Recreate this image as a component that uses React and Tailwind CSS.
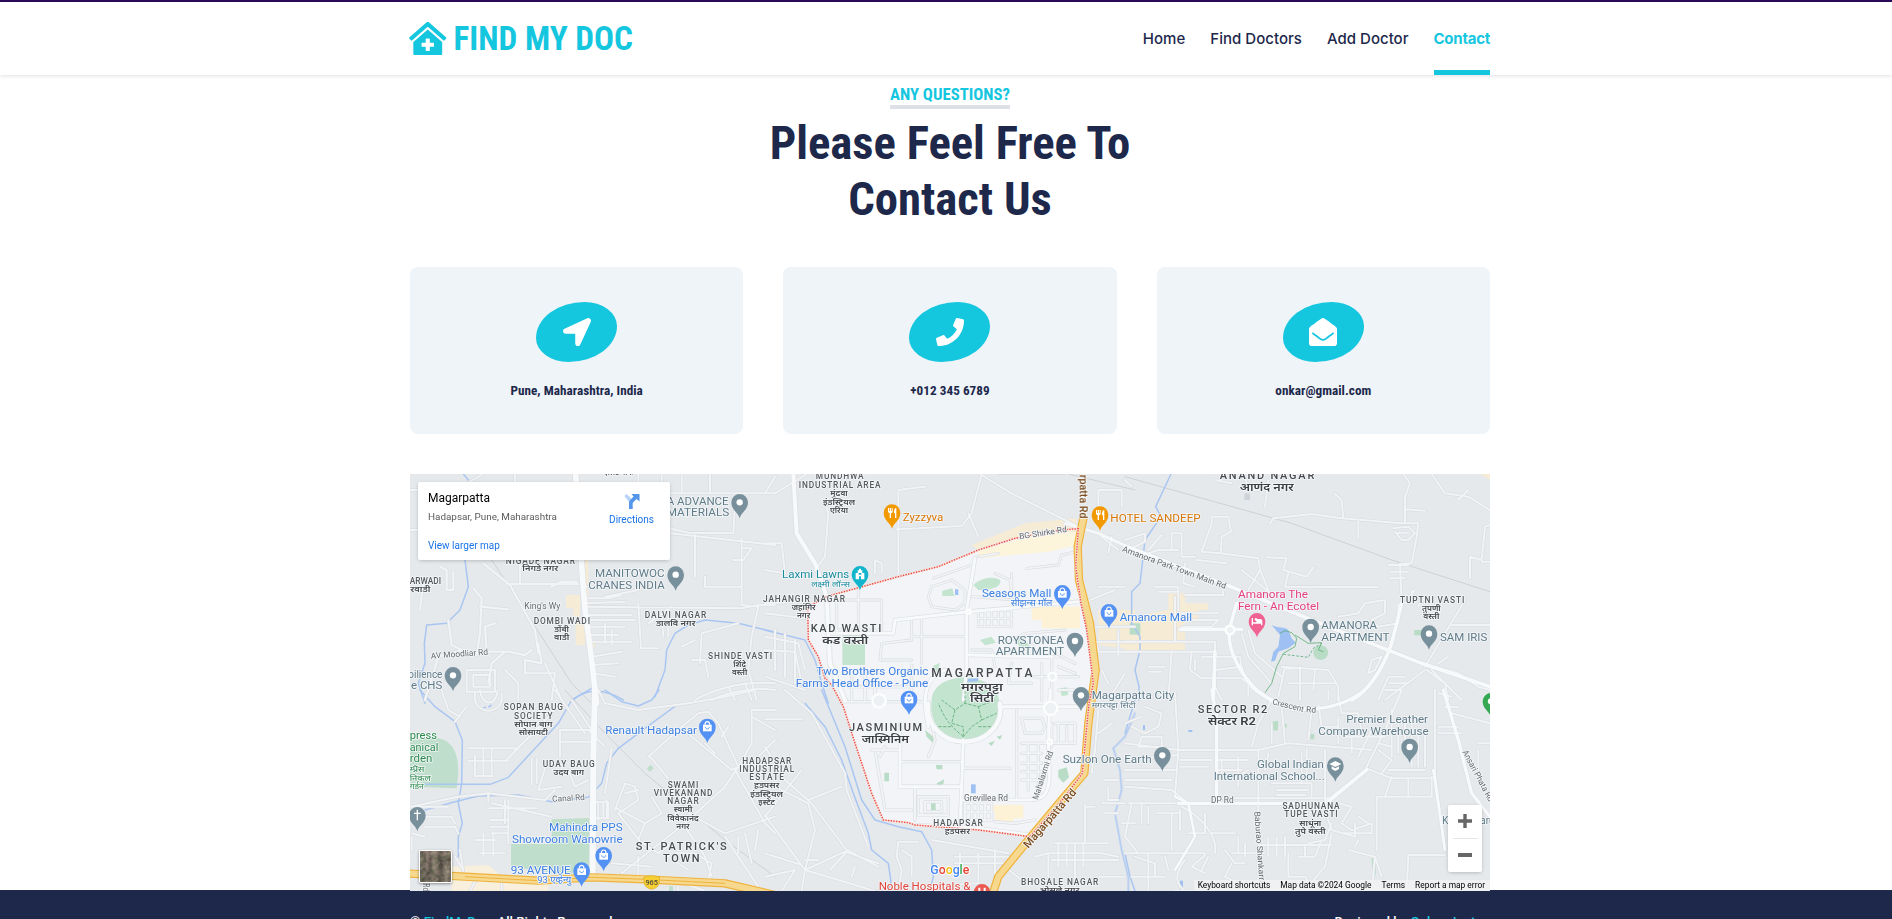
import React from "react";
import { FaLocationArrow, FaPhone, FaEnvelopeOpen, FaClinicMedical } from "react-icons/fa";

/* Origins of the map tiles; drawing inside a tile uses thirds of a pixel. */
const ORIGIN = {
  A: [405, 470],
  B: [765, 470],
  C: [1125, 470],
  D: [405, 690],
  E: [765, 690],
  F: [1125, 690],
};
const place = (t) => `translate(${ORIGIN[t][0]} ${ORIGIN[t][1]}) scale(0.33333)`;

const AREAS = [
  ["B", "M190 378L285 352L400 320L520 290L640 240L750 205L940 176L932 290L948 400L965 480L985 640L972 700L952 910L900 980L795 1100L640 1080L450 1065L355 1050L320 970L270 820L235 710L200 645L160 560L130 510L128 410Z", "#f2f4f7"],
  ["B", "M620 225L780 160L935 145V185L800 195L640 240Z", "#f6ecd6"],
  ["B", "M800 410H945V475H830V450H800Z", "#fdf2d6"],
  ["B", "M640 242L800 198L938 185V225L850 245L640 265Z", "#fdf4dc"],
  ["B", "M1000 420H1110V540L1000 525Z", "#f6ebd5"],
  ["C", "M0 445L130 420V370H180V400H250V420H220V455H180V540H0Z", "#f6ebd5"],
  ["C", "M1065 12H1095V30Z", "#f6ebd5"],
  ["C", "M14 460H46V494H14Z", "#b9dcc6"],
  ["A", "M483 375H525V440H505V415H483ZM512 455H540V525H512ZM530 270H550V400H530ZM545 510H570V532H545Z", "#f6ebd5"],
  ["B", "M232 495H300V585H232Z", "#c3e4cf"],
  ["B", "M625 345C650 320 690 318 705 330C712 348 680 362 640 360Z", "#c3e4cf"],
  ["B", "M532 362L562 355L568 378H532ZM645 510L680 500L692 518L660 526ZM740 505L775 500L795 530L770 535ZM505 588L525 578L518 605L500 600ZM885 655L905 652L910 675L890 678Z", "#c3e4cf"],
  ["E", "M500 30C505 -60 690 -60 702 30C712 100 660 148 595 150C535 145 490 100 500 30Z", "#c3e4cf"],
  ["E", "M480 120L510 145L505 160L485 140ZM695 140L712 135L705 150ZM670 160L690 152L680 168ZM512 225H532V238H515ZM515 280L538 268L535 282L518 290ZM358 248H372V274H358ZM498 340H512V362H498ZM880 240L905 232L912 262L895 278L880 262Z", "#b9dcc6"],
  ["E", "M672 345H775V385H745V395H690V370Z", "#fdf2d6"],
  ["D", "M15 150L100 145C150 155 160 200 160 250L155 295L15 290Z", "#bfdecb"],
  ["D", "M318 462H440V388L553 384V550H455L318 530Z", "#bfdecb"],
  ["D", "M725 235L738 224L746 235L735 245ZM792 588H804V603H792Z", "#bfdecb"],
  ["D", "M140 530L250 525L300 570L430 580V603H140Z", "#f8efdc"],
  ["C", "M440 465C460 475 480 470 490 480L500 505L512 518L490 535L460 545L450 572L438 575L445 545L460 530L465 495Z", "#9fc0f3"],
  ["C", "M585 526a22 22 0 1 0 4 0Z", "#b9dcc6"],
  ["C", "M868 480H895V496H868Z", "#b9dcc6"],
  ["F", "M440 95L460 92L458 122L438 120ZM472 96L486 104L484 116ZM556 132H568V148H556ZM740 505H752V555L742 556Z", "#b9dcc6"],
  ["E", "M618 283H632V310H618Z", "#9fc0f3"],
  ["B", "M570 358H580V375H570ZM605 628L640 624L638 634L605 636Z", "#9fc0f3"],
  ["F", "M165 572H174V600H165ZM190 120H202V126H190ZM54 106H60V120H54Z", "#9fc0f3"],
  ["C", "M358 70H375V90H358Z", "#cfd4da"],
];

/* Water courses */
const WATER = [
  ["A", "M175 12L215 60L180 270L190 350L165 420L125 460L65 465L58 520L60 580L40 640L60 700"],
  ["A", "M1110 487L1000 460L900 450L850 465L810 490L785 540L780 600L750 680"],
  ["A", "M505 690C540 655 600 655 655 690"],
  ["D", "M45 0L90 50L150 95L172 150L170 280L160 340L172 400L160 440V500"],
  ["D", "M60 283H255L310 262L460 100L500 30L560 -5"],
  ["D", "M600 0L650 35L700 48L740 30L762 0"],
  ["D", "M60 360L150 335L220 318L340 315L440 335L550 322L590 280L605 220L640 175L740 100L820 42"],
  ["B", "M0 480L120 510L150 570L170 640L190 700"],
  ["E", "M120 40L180 110L230 210L265 310L310 430L320 480L370 520L378 575L370 603"],
  ["E", "M170 0L240 170L290 330L330 390L400 410L470 425L500 480L505 560L495 603"],
  ["E", "M1110 70L1080 140L1045 175L1065 240L1070 300L1050 370L1070 480L1090 560V603"],
  ["C", "M138 12L92 110L108 140L60 210L45 340L20 365V460L45 500V540L30 600L42 650V690"],
  ["F", "M30 30L0 130M0 490L15 560L30 603"],
];

/* Minor streets: [tile, path, width] */
const ROADS = [
  ["A", "M15 60H150L235 12M15 180H40M330 12V55M700 12V35M770 12V70H1110M770 25V60M830 12V65M915 12V65M990 105L985 190L850 188L795 175M795 190L1110 225M870 195V320M1010 205V405L1060 410M1010 235H1040L1015 270H985M900 320V350H1010", 6],
  ["A", "M105 290L125 300V360H145V305M55 340L45 420M130 50L70 100M345 280V335M315 342H520M315 345L390 480L400 550M235 280L315 345M440 350L470 335H515M205 355L230 385L225 490L215 555M225 410L310 418M130 450L140 525L170 540L100 560L60 690M270 460L240 470L245 545H310L360 555L380 540M300 545L260 580L250 640M360 610V570L410 580L400 520", 7],
  ["A", "M545 350H630M545 385H610L650 375M545 400L660 395M545 410L1010 415L1060 405H1110M545 435H680M545 450H690M545 470H660M545 495H640M545 515H680M600 460V520M620 480V525M700 400L708 535H760M730 460L800 410M770 440L775 500M790 440V500M700 360L600 380", 6],
  ["A", "M1060 410L1040 500L1030 600L1055 690M1000 460L890 490L885 580M830 530L870 510M860 570H900L910 620M1110 640C1010 630 920 660 870 690M1110 660C1040 650 960 670 920 690M970 650L990 690M1020 640L1040 690M560 560L650 545M560 585L640 580M560 610L630 620", 6],
  ["A", "M185 600H270V665H185ZM205 615H255V650H205ZM300 600L340 640V690M420 580L470 690M360 610H450L440 690", 6],
  ["B", "M0 70L30 20M125 12L30 70M180 100L190 130L180 260L150 300M400 60V320M400 60L480 50M395 178L590 168L620 130L650 12M645 12L740 70L800 100L930 165M610 130L640 200M0 220H50L60 310L0 300M330 310V270L350 280V310M0 400L120 395M0 430L120 445M0 500L100 520L120 600M0 540L90 545L110 640M30 480V600M60 490V620M90 510V640M0 620L120 660", 6],
  ["B", "M190 390H350V480H210M280 350V480M215 380V490M505 325L620 285M490 380L500 350L560 330L600 360V400L570 420L500 410ZM785 295L880 285L890 255L935 245M740 310V390M640 260L700 250M620 380L750 390M690 310L735 330L740 370M440 450V510L350 520L345 570H440M470 440V580M440 500H600M640 420V470H740V420ZM660 420V470M680 420V470M700 420V470M720 420V470M640 445H740M620 540H680L690 590M720 520L780 490L900 480M780 540L840 500", 5],
  ["B", "M720 560H880M740 580L730 640H800M830 580V690M860 560V690M890 560L930 580M800 620H940M880 590L930 610M880 660H930V690M780 540V560M250 650H440M260 600V690M440 585V690M300 690V600M330 640V690", 6],
  ["B", "M970 470H1110M985 490L1000 540M990 515H1110M1000 545H1110M1060 480V560M1000 350H1080M950 400L1050 360M1080 610L1030 690M1000 120V60H1070V110M1010 200L1060 240M1040 200L1030 250M1010 600L1030 640", 6],
  ["C", "M435 160L445 145L560 132L650 145L830 160H880L875 200L860 280L825 282L830 400M630 72L650 90L655 145M700 150V205M835 12L855 40L840 80V160M840 118L900 122M920 12L960 70L1030 80L1110 130M1000 90L1030 60M805 175L850 170L870 190L850 210H830L810 185M820 188H850M790 285H850M795 305H850M795 325H840M1095 165L1080 170L1070 270L1035 260V325M1070 275H1095", 6],
  ["C", "M425 262L485 265L475 300L545 320L565 292M490 310L480 350L760 352M285 250L230 245L260 160V140H310L318 185L290 200L288 248M285 250L400 265L405 300L430 360M405 300L370 360M160 240L100 240L70 250M140 240V190H170V260H210M160 350V420M90 350H160M100 365H155M180 280L175 340L210 350M215 270L305 280M180 375H295L290 345M160 430H280M180 450H280L260 470H170M0 210L60 190V215L10 240M70 240L110 195", 6],
  ["C", "M0 515H270V650L290 690M0 545H270M150 380V510M140 545L130 690M70 590H120M70 605H110M200 545L195 600L230 625H350L370 640L370 680M210 570V600M270 600L350 590M350 590L360 620M230 560L340 560M0 30L20 50M270 30L320 40M360 20L370 60H405M430 30L420 110M350 300L450 380", 6],
  ["C", "M350 490L370 560L440 640M370 480L390 550L470 620M345 560L350 600M470 590L610 600L640 650V690M480 590L460 680M525 590V690M570 600L565 660M490 640H630M610 690V660M740 570L770 560L750 600L730 610ZM640 440L700 430L720 400L780 390V430L740 450L760 470L820 460V400M840 400L870 360M830 380H900L880 410M860 400V360M1020 390L900 590M980 465H1095M940 580L970 560M760 690L790 620H840M790 640H850M780 660H830M920 600L1010 690M905 600L960 640L970 690M930 590L1000 610L1060 650L1095 660M900 600L780 690", 6],
  ["D", "M165 80L130 60L110 0M210 10C200 80 300 80 290 10M225 0C230 50 275 50 278 0M150 95L185 50M190 175H330M190 212H310M210 195V260M235 180V260M260 180V260M210 258H265M305 210L460 50M330 180L420 100M500 30L560 120M465 120H555M465 155H560M465 120V200M380 205V285M395 205V280M420 235L400 300L470 290M490 240L510 290L550 270M580 0L600 40L700 60L850 40L960 20L1050 0", 6],
  ["D", "M600 310L620 175M580 340V390M595 340V385M605 330V380M560 335H605M560 385H610L610 335M550 120L600 170M450 0L540 130M730 200L830 110L880 70L910 65L940 100L1000 230L960 290L840 400L650 550M735 200L790 265M830 115L980 240L1060 200L1110 150M1000 230L1040 160V60H1110M1040 80L1110 120M950 140L970 110M900 160L930 190M990 240L1080 400L1110 430M850 370L960 430L1110 380M960 440L1060 590M840 410L900 500L920 560", 6],
  ["D", "M630 360L660 280L690 290L700 330L640 370L710 460M660 310L700 300M635 355L720 400L770 370L740 320M720 400L700 450L760 490L800 460M700 500V560M790 500L850 540M620 520L740 530M810 490H870L920 520L910 570M1000 440V490M1020 430L1040 520M1060 420L1050 480", 6],
  ["D", "M15 350L160 320L250 310L420 330L450 300M260 340L440 380M250 355H395M310 330V460M300 330V400M255 390H310M255 410H310M235 430V500M210 450H270M225 490H300M265 430V500M260 430H310M15 380H140L150 400M20 430L60 440M60 410L150 410L160 430M20 480V440M165 480L175 545M250 310V335M20 350H130", 6],
  ["D", "M20 540L60 570M150 500L175 540M210 575L195 603M290 570V603M350 575H520M820 570V603M850 585L900 603", 6],
  ["E", "M0 170L60 270L140 340L245 480L340 530M0 380L110 240M30 290L130 340L150 420L120 540M0 375L90 500L120 540L110 603M0 490L110 525M120 540L330 603M120 540L240 485L340 520M195 540L250 480M160 510H120M260 560L270 530M0 560L90 540L50 603M0 88H110M60 0L140 70L240 250L245 300L310 470M130 330L230 290M400 455L395 500L410 540L400 603M400 455H460M410 480L440 500V560M500 450L730 490M585 490V540M570 500H730M570 520H740M640 490V580M690 480V600M450 590L640 580", 6],
  ["E", "M225 35H480M405 100V290H590M320 180H400M330 180L360 360H440M360 170L345 200M410 215H590M590 235H735M495 80L510 150L490 200M450 295V390M460 320H550V375H460ZM480 335H530V365H480ZM600 340H680V390H600ZM620 340V390M640 340V390M660 340V390M600 365H680M755 60V330M770 85H830L840 110L830 130H780ZM860 100V170M770 160H930V100H870M790 160V300M820 160V290M770 190H830M770 220H830M770 245H830M770 270H820M850 190V100M880 100V160M905 110V160M690 395L750 400L810 390", 6],
  ["E", "M960 350H990M960 345V460M810 500L850 490L1010 490L1060 500M850 490V560M880 460V530M905 460V530M930 460V530M955 460V530M870 460H1030M860 510H1060M720 530L770 570M1000 60L990 180L980 250M1020 270H1060M1030 290V330H1060M1010 340L1080 340M1020 370H1060M1070 400L1110 400M1000 130L1040 100M720 540L700 560M930 530V603M1000 560H1080", 6],
  ["F", "M0 100L50 80M60 50L110 70L100 110L60 130L20 110M50 140H110V170H40ZM0 160L160 180M0 210L160 195M0 240H150M0 270H140M0 290L140 300L190 340M10 340H150M20 340L0 440L40 490M50 340V400M70 350V400M95 370H160M140 370V480M70 490V603M30 500L90 520V560H30M20 560H120M170 350C230 380 280 440 270 490M165 360V420M0 490H240M120 500L130 540M240 495L200 530L240 550M240 370V430H190M260 430H330", 6],
  ["F", "M150 10L160 180L150 320M160 180H400L490 160L620 170M400 180V460M165 210H260M165 230H250M280 210H370M280 240H350M290 210V260M340 200V290M430 190L420 240M440 280H560V320M455 300H550M455 315H540M545 175V280M530 190V280M600 180V330M330 265L370 240M380 170L400 100L440 30M440 100V160M470 50L480 160M500 60H560L550 150M580 40L590 110H640M620 170L740 180M640 80V160M680 120V190M650 140H780", 6],
  ["F", "M640 20L650 70H700L710 130M740 120L700 200M830 0L780 120L720 240L600 335M725 235L800 265H915M760 180L800 210L770 250M800 60V200M820 80V190M840 100V200M860 80V230M880 130V230M900 130V230M790 240H900M760 160L800 170M800 260L780 320M850 265V320M920 260V320H755V480M930 0V250L960 480M940 10L980 20M940 110H1000M960 50H1000M980 70L1095 100M940 130H1010M1060 160H1095M1060 180V240", 6],
  ["F", "M270 325H620L600 360L620 420L690 440V400M620 400L600 450L550 460M400 465H620M430 440V500M455 440V500M480 440V500M320 490H420M300 480L330 520L360 520M340 440V490M360 460V500M250 500L230 540M400 500V560M490 490V560H540L560 590M590 450L570 500H520M540 470V500M640 340L680 350L650 400L680 420L740 400V430H650M700 380L730 400M620 430L600 530L540 600M670 480L750 500L740 603M750 500L770 560M845 603L850 495H960M700 450L690 470M320 520L300 560L340 580M180 510C140 560 160 590 180 603", 6],
];

/* Wider streets */
const MAIN = [
  ["A", "M512 12L528 260L540 420L555 530L575 700", 17],
  ["D", "M570 0L565 200L563 560", 18],
  ["B", "M85 12L95 190L150 280L185 380L195 580L240 690", 12],
  ["B", "M630 265L605 420V600L595 690M200 490H385L390 450L610 425L940 395M610 555L860 560", 9],
  ["E", "M595 150L590 290L585 400M490 110C470 20 480 -40 540 -60M702 50H950M590 330H790C850 330 860 300 850 190L855 0M405 110V290H585", 9],
  ["E", "M455 405L640 415L800 435", 9],
  ["B", "M900 160L1000 190L1110 240", 9],
  ["C", "M0 228L330 355L560 450L890 580L1095 650", 11],
  ["C", "M335 400L315 470C300 540 360 650 440 690M165 478H350M800 520C770 610 720 670 680 690M830 400L800 520M270 545L265 690", 11],
  ["F", "M380 -10C460 60 600 90 720 0M275 80V320M260 0L275 80M160 340H620M955 0L1000 150L1040 310L1095 380M725 240L610 335", 10],
  ["F", "M150 320L190 340L210 440L150 540M925 240L960 480", 8],
  ["E", "M490 40C480 100 530 155 595 155C670 155 715 100 705 40", 13],
];

const RAIL = [
  ["A", "M180 150L300 330L500 640L560 700"],
  ["D", "M480 0L600 130L720 250L960 450L1110 560"],
  ["C", "M0 20L500 160L800 270L1110 370"],
  ["B", "M700 12L900 12M910 12L1110 60"],
];

const HIGHWAYS = [
  ["B", "M955 145L938 230L942 330L975 460L992 600L970 760L958 910L890 990L790 1110L700 1220L680 1280"],
  ["D", "M0 550L180 560L400 572L560 562L720 568L960 580L1110 615"],
];

const ROUNDABOUTS = [
  ["E", 342, 32, 20], ["E", 857, 55, 20], ["B", 862, 620, 12], ["E", 854, 155, 7], ["C", 315, 480, 13], ["B", 612, 425, 6],
];

const BOUNDARY = "M190 378L285 352L400 320L520 290L640 240L750 205L885 180L940 176L932 290L948 400L965 480L985 640L972 700L952 910L900 980L795 1100L640 1080L450 1065L430 1058L355 1050L320 970L270 820L235 710L200 645L180 625L160 560L130 510L128 410Z";

const KIND = {
  area: ["#55585c", 25, 500],
  big: ["#46494d", 33, 500],
  hindi: ["#46494d", 23, 600],
  hindiBig: ["#3c3f43", 32, 600],
  poi: ["#5f7b88", 35, 400],
  shop: ["#3d80e2", 35, 400],
  shopHi: ["#3d80e2", 26, 400],
  food: ["#d97706", 35, 400],
  stay: ["#e5407f", 35, 400],
  park: ["#2a8a4c", 34, 400],
  parkHi: ["#2a8a4c", 25, 400],
  teal: ["#178a9c", 34, 400],
  tealHi: ["#178a9c", 25, 400],
  poiHi: ["#5f7b88", 22, 400],
  med: ["#e0443a", 35, 400],
  road: ["#66696d", 25, 400],
  hwy: ["#7a4a1c", 30, 500],
};

/* [tile, kind, anchor (s|m|e), x, baseline, text, width, rotation, size] */
const LABELS = [
  ["A", "area", "s", 302, 282, "NIGADE NAGAR", 208],
  ["A", "hindi", "m", 406, 304, "निगडे नगर", 108],
  ["A", "area", "s", 14, 342, "ARWADI", 94],
  ["A", "hindi", "s", 16, 366, "रवाडी", 60],
  ["A", "poi", "s", 785, 105, "A ADVANCE", 186],
  ["A", "poi", "s", 785, 139, "MATERIALS", 188],
  ["A", "poi", "e", 779, 321, "MANITOWOC", 209],
  ["A", "poi", "e", 779, 356, "CRANES INDIA", 229],
  ["A", "road", "s", 358, 418, "King's Wy", 108],
  ["A", "area", "s", 386, 462, "DOMBI WADI", 169],
  ["A", "hindi", "m", 470, 486, "डोंबी", 44],
  ["A", "hindi", "m", 470, 510, "वाडी", 46],
  ["A", "area", "s", 719, 443, "DALVI NAGAR", 185],
  ["A", "hindi", "m", 812, 468, "डालवि नगर", 118],
  ["A", "area", "s", 909, 566, "SHINDE VASTI", 192],
  ["A", "hindi", "m", 1004, 590, "शिंदे", 38],
  ["A", "hindi", "m", 1004, 615, "वस्ती", 46],
  ["A", "road", "s", 78, 566, "AV Moodliar Rd", 172, -4],
  ["A", "poi", "s", 10, 623, "oilience", 102],
  ["A", "poi", "s", 18, 658, "e CHS", 94],
  ["A", "hindi", "m", 640, 14, "एलिट पार्क", 90],
  ["B", "area", "m", 224, 28, "MUNDHWA", 143],
  ["B", "area", "m", 224, 54, "INDUSTRIAL AREA", 245],
  ["B", "hindi", "m", 222, 79, "मुंढवा", 52],
  ["B", "hindi", "m", 222, 104, "इंडस्ट्रियल", 96],
  ["B", "hindi", "m", 222, 128, "एरिया", 54],
  ["B", "food", "s", 413, 153, "Zyzzyva", 122],
  ["B", "food", "s", 1036, 157, "HOTEL SANDEEP", 271],
  ["B", "teal", "e", 253, 323, "Laxmi Lawns", 202],
  ["B", "tealHi", "e", 255, 351, "लक्ष्मी लॉन्स", 116],
  ["B", "area", "s", -6, 395, "JAHANGIR NAGAR", 246],
  ["B", "hindi", "m", 116, 419, "जहांगिर", 72],
  ["B", "hindi", "m", 116, 443, "नगर", 40],
  ["B", "big", "s", 137, 485, "KAD WASTI", 212],
  ["B", "hindiBig", "m", 241, 521, "कड वस्ती", 138],
  ["B", "shop", "s", 154, 615, "Two Brothers Organic", 336],
  ["B", "shop", "s", 92, 650, "Farms Head Office - Pune", 398],
  ["B", "shop", "e", 859, 381, "Seasons Mall", 208],
  ["B", "shopHi", "e", 862, 408, "सीझन्स मॉल", 124],
  ["B", "poi", "e", 897, 521, "ROYSTONEA", 199],
  ["B", "poi", "e", 897, 555, "APARTMENT", 205],
  ["B", "big", "s", 499, 621, "MAGARPATTA", 303, 0, 36],
  ["B", "hindiBig", "m", 651, 662, "मगरपट्टा", 126],
  ["B", "hindiBig", "m", 651, 697, "सिटी", 72],
  ["B", "shop", "s", 1064, 452, "Amanora Mall", 217],
  ["B", "road", "s", 764, 208, "BG Shirke Rd", 144, -9],
  ["B", "hwy", "s", 944, 14, "rpatta Rd", 132, 90],
  ["B", "poi", "s", 980, 686, "Magarpatta City", 248],
  ["B", "poiHi", "s", 980, 713, "मगरपट्टा सिटी", 132],
  ["C", "big", "s", 284, 27, "ANAND NAGAR", 284],
  ["C", "hindiBig", "m", 425, 62, "आणंद नगर", 162],
  ["C", "road", "s", -10, 244, "Amanora Park Town Main Rd", 330, 20],
  ["C", "stay", "s", 339, 384, "Amanora The", 210],
  ["C", "stay", "s", 339, 419, "Fern - An Ecotel", 243],
  ["C", "poi", "s", 589, 478, "AMANORA", 167],
  ["C", "poi", "s", 589, 513, "APARTMENT", 205],
  ["C", "area", "s", 825, 399, "TUPTNI VASTI", 193],
  ["C", "hindi", "m", 919, 424, "तुपणी", 56],
  ["C", "hindi", "m", 919, 448, "वस्ती", 48],
  ["C", "poi", "s", 945, 514, "SAM IRIS", 142],
  ["D", "area", "m", 385, 61, "SOPAN BAUG", 178],
  ["D", "area", "m", 385, 86, "SOCIETY", 116],
  ["D", "hindi", "m", 385, 111, "सोपान बाग", 114],
  ["D", "hindi", "m", 385, 135, "सोसायटी", 88],
  ["D", "park", "s", 14, 147, "press", 82],
  ["D", "park", "s", 14, 182, "anical", 86],
  ["D", "park", "s", 14, 217, "rden", 68],
  ["D", "parkHi", "s", 14, 245, "म्प्रेस", 44],
  ["D", "parkHi", "s", 14, 272, "निकल", 64],
  ["D", "parkHi", "s", 14, 298, "गर्डन", 42],
  ["D", "area", "m", 491, 231, "UDAY BAUG", 156],
  ["D", "hindi", "m", 491, 255, "उदय बाग", 92],
  ["D", "shop", "s", 601, 133, "Renault Hadapsar", 275],
  ["D", "road", "s", 442, 335, "Canal Rd", 98, -3],
  ["D", "area", "m", 834, 293, "SWAMI", 92],
  ["D", "area", "m", 834, 318, "VIVEKANAND", 176],
  ["D", "area", "m", 834, 343, "NAGAR", 94],
  ["D", "hindi", "m", 834, 367, "स्वामी", 56],
  ["D", "hindi", "m", 834, 392, "विवेकानंद", 94],
  ["D", "hindi", "m", 834, 417, "नगर", 40],
  ["D", "shop", "e", 653, 423, "Mahindra PPS", 221],
  ["D", "shop", "e", 653, 459, "Showroom Wanowrie", 332],
  ["D", "big", "s", 692, 481, "ST. PATRICK'S", 273],
  ["D", "big", "s", 774, 516, "TOWN", 110],
  ["D", "shop", "e", 497, 551, "93 AVENUE", 180],
  ["D", "shopHi", "e", 499, 580, "93 एव्हेन्यु", 102],
  ["D", "road", "s", 53, 580, "Rd", 24, 90],
  ["E", "area", "s", -68, 221, "HADAPSAR", 147],
  ["E", "area", "m", 5, 246, "INDUSTRIAL", 165],
  ["E", "area", "m", 5, 271, "ESTATE", 104],
  ["E", "hindi", "m", 5, 295, "हडपसर", 76],
  ["E", "hindi", "m", 5, 320, "इंडस्ट्रियल", 98],
  ["E", "hindi", "m", 5, 345, "इस्टेट", 50],
  ["E", "big", "s", 252, 124, "JASMINIUM", 219],
  ["E", "hindiBig", "m", 361, 159, "जास्मिनिम", 142],
  ["E", "poi", "s", 893, 220, "Suzlon One Earth", 267],
  ["E", "road", "s", 597, 333, "Grevillea Rd", 132],
  ["E", "road", "s", 818, 331, "Mahalaxmi Rd", 152, -72],
  ["E", "hwy", "s", 790, 476, "Magarpatta Rd", 222, -49, 33],
  ["E", "area", "m", 579, 408, "HADAPSAR", 149],
  ["E", "hindi", "m", 577, 432, "हडपसर", 76],
  ["E", "med", "s", 341, 601, "Noble Hospitals &", 275],
  ["E", "area", "m", 884, 586, "BHOSALE NAGAR", 232],
  ["E", "hindi", "m", 884, 609, "भोसले नगर", 118],
  ["F", "big", "s", 218, 70, "SECTOR R2", 209, 0, 33],
  ["F", "hindiBig", "m", 321, 104, "सेक्टर R2", 144],
  ["F", "road", "s", 441, 43, "Crescent", 96, 14],
  ["F", "road", "s", 543, 67, "Rd", 30, 2],
  ["F", "poi", "e", 909, 100, "Premier Leather", 245],
  ["F", "poi", "e", 911, 135, "Company Warehouse", 331],
  ["F", "poi", "e", 597, 233, "Global Indian", 201],
  ["F", "poi", "e", 599, 269, "International School...", 333],
  ["F", "road", "s", 258, 339, "DP Rd", 68],
  ["F", "road", "s", 388, 365, "Baburao Shankarrao", 235, 86],
  ["F", "area", "m", 558, 357, "SADHUNANA", 171],
  ["F", "area", "m", 558, 382, "TUPE VASTI", 160],
  ["F", "hindi", "m", 556, 407, "साधूंना", 66],
  ["F", "hindi", "m", 556, 432, "तुपे वस्ती", 92],
  ["F", "road", "s", 1012, 186, "Ansari Phata Rd", 170, 62],
  ["F", "poi", "s", 952, 402, "K", 18],
  ["F", "poi", "s", 1066, 402, "aru", 42],
  ["F", "hindi", "m", 195, 618, "सातव नगर", 90],
];

/* [tile, tip x, tip y, colour, glyph] */
const PINS = [
  ["A", 1004, 145, "#78909c", "dot"], ["A", 812, 362, "#78909c", "dot"], ["A", 144, 664, "#78909c", "dot"],
  ["B", 381, 176, "#f29900", "fork"], ["B", 1005, 182, "#f29900", "fork"], ["B", 285, 361, "#12b5cb", "tower"],
  ["B", 892, 418, "#5491f5", "bag"], ["B", 1032, 475, "#5491f5", "bag"], ["B", 930, 561, "#78909c", "dot"],
  ["C", 396, 502, "#f06292", "bed"], ["C", 557, 519, "#78909c", "dot"], ["C", 912, 539, "#78909c", "dot"],
  ["D", 907, 159, "#5491f5", "bag"], ["D", 596, 544, "#5491f5", "bag"], ["D", 530, 590, "#5491f5", "bag"], ["D", 37, 424, "#78909c", "cross"],
  ["E", 432, 75, "#5491f5", "bag"], ["E", 948, 64, "#78909c", "dot"], ["E", 651, 655, "#ea5a50", "h"],
  ["F", 112, 244, "#78909c", "dot"], ["F", 854, 219, "#78909c", "dot"], ["F", 631, 275, "#78909c", "cap"], ["F", 1098, 82, "#34a853", "dot"],
];

const GLYPH = {
  dot: <circle cy="-48" r="9.5" fill="#fff" />,
  bag: <><path d="M-13-55h26v20h-26z" fill="#fff" /><path d="M-7-55c0-12 14-12 14 0" fill="none" stroke="#fff" strokeWidth="3.5" /><path d="M-6-48c1 8 11 8 12 0" fill="none" stroke="#5491f5" strokeWidth="3" /></>,
  fork: <path d="M-12-62v10c0 4 3 6 5 6v14h4v-14c3 0 5-2 5-6v-10h-3v9h-2v-9h-4v9h-2v-9zM6-50c0-7 2-12 7-12v30H9v-14H6z" fill="#fff" />,
  tower: <path d="M-13-33v-19h6v-8h4v-5h6v5h4v8h6v19H3v-9h-6v9zM-4-52h8v5h-8z" fill="#fff" fillRule="evenodd" />,
  bed: <path d="M-16-58h4v13h10v-10h12c4 0 6 3 6 6v13h-4v-5h-24v5h-4zM-7-54a4 4 0 1 1 0 .1z" fill="#fff" />,
  cross: <path d="M-2-65h4v9h8v4h-8v19h-4v-19h-8v-4h8z" fill="#fff" />,
  cap: <path d="M0-62l18 9-18 9-18-9zM-11-46l11 6 11-6v8l-11 6-11-6z" fill="#fff" />,
  h: <path d="M-11-62h6v10h10v-10h6v28H5v-11H-5v11h-6z" fill="#fff" />,
};

function Paths({ items, ...rest }) {
  return (
    <g fill="none" strokeLinecap="round" strokeLinejoin="round" {...rest}>
      {items.map(([t, d, w], i) => (
        <path key={i} d={d} transform={place(t)} strokeWidth={w} />
      ))}
    </g>
  );
}

const cased = (items) => items.map(([t, d, w]) => [t, d, w + 3.5]);

function CityMap() {
  return (
    <svg viewBox="410 474 1080 417" className="block h-[417px] w-[1080px]" fontFamily="Roboto, 'Noto Sans', sans-serif">
      <rect x="410" y="474" width="1080" height="417" fill="#e6e9ec" />
      {AREAS.map(([t, d, c], i) => (
        <path key={i} d={d} fill={c} transform={place(t)} />
      ))}
      <Paths items={RAIL} stroke="#cdd1d5" strokeWidth="3" />
      <g opacity="0.95"><Paths items={WATER.map(([t, d]) => [t, d, 4.5])} stroke="#a6c4f2" /></g>
      <Paths items={cased(ROADS)} stroke="#d8dce0" />
      <Paths items={cased(MAIN)} stroke="#dadee2" />
      <Paths items={ROADS} stroke="#f1f3f5" />
      <Paths items={MAIN} stroke="#f7f9fa" />
      {ROUNDABOUTS.map(([t, x, y, r], i) => (
        <circle key={i} cx={x} cy={y} r={r} transform={place(t)} fill="#eef1f4" stroke="#fcfdfd" strokeWidth="7" />
      ))}
      <Paths items={HIGHWAYS.map(([t, d]) => [t, d, 25])} stroke="#efb23c" />
      <Paths items={HIGHWAYS.map(([t, d]) => [t, d, 18])} stroke="#f6d98f" />
      <g transform={place("D")}>
        <path d="M180 560L400 572L560 562L720 568L960 580" fill="none" stroke="#efb23c" strokeWidth="3" />
        <path d="M716 562q24-10 48 0l-2 20q-4 12-22 16q-18-4-22-16z" fill="#f7cf34" stroke="#d7ab1c" strokeWidth="2" />
        <text x="740" y="584" textAnchor="middle" fontSize="22" fontWeight="500" fill="#4a4a3a">965</text>
        <path d="M235 54l8-3M250 52l10-8" stroke="#9fc0f3" strokeWidth="4" />
      </g>
      <g fill="none" stroke="#5aab75" strokeWidth="2.4">
        <path transform={place("E")} strokeDasharray="10 4" d="M595 140C560 110 540 90 520 40M595 140V110L560 100L570 60L600 40L640 50L650 90L620 110L595 140M520 110H560M640 110H680M570 60L530 30M640 50L690 30M600 40V0M650 90L695 70" />
        <path transform={place("C")} d="M420 668L440 640L455 590L475 550L510 530L515 505L500 488L480 482L465 490M510 495L550 520L590 518L580 540L595 545" />
        <path transform={place("C")} strokeDasharray="8 5" d="M475 553L550 562L565 535L590 520" />
      </g>
      <path d={BOUNDARY} transform={place("B")} fill="none" stroke="#fbdcd9" strokeWidth="6" />
      <path d={BOUNDARY} transform={place("B")} fill="none" stroke="#ea4a3f" strokeWidth="4.2" strokeDasharray="4 4" />
      {LABELS.map(([t, k, a, x, y, s, w, r, size], i) => (
        <g key={i} transform={place(t)}>
          <text
            x={x}
            y={y}
            transform={r ? `rotate(${r} ${x} ${y})` : undefined}
            textAnchor={a === "s" ? "start" : a === "m" ? "middle" : "end"}
            fill={KIND[k][0]}
            fontSize={size || KIND[k][1]}
            fontWeight={KIND[k][2]}
            textLength={w}
            lengthAdjust={k === "area" || k === "big" ? "spacing" : "spacingAndGlyphs"}
            stroke="#f4f6f8"
            strokeWidth="5"
            strokeLinejoin="round"
            paintOrder="stroke"
          >
            {s}
          </text>
        </g>
      ))}
      {PINS.map(([t, x, y, c, g], i) => (
        <g key={i} transform={place(t)}>
          <g transform={`translate(${x} ${y})`}>
            <path d="M0 0C-4-18-25-24-25-48a25 25 0 0 1 50 0C25-24 4-18 0 0z" fill={c} />
            {GLYPH[g]}
          </g>
        </g>
      ))}
      <text transform={place("E")} x="496" y="553" fontSize="39" fontWeight="500" textLength="117" lengthAdjust="spacingAndGlyphs" stroke="#fff" strokeWidth="5" paintOrder="stroke">
        <tspan fill="#4285f4">G</tspan><tspan fill="#ea4335">o</tspan><tspan fill="#fbbc04">o</tspan><tspan fill="#4285f4">g</tspan><tspan fill="#34a853">l</tspan><tspan fill="#ea4335">e</tspan>
      </text>
    </svg>
  );
}

function PlaceCard() {
  return (
    <div className="absolute left-2 top-2 flex h-[78px] w-[252px] justify-between rounded-[2px] bg-white pl-[10px] pr-[16px] shadow-[0_1px_4px_-1px_rgba(0,0,0,0.3)]">
      <div className="flex flex-col items-start whitespace-nowrap">
        <span className="mt-[8px] text-[12px] leading-[16px] text-black">Magarpatta</span>
        <span className="mt-[4px] text-[9.900px] leading-[14px] text-[#5b5b5b]">Hadapsar, Pune, Maharashtra</span>
        <span className="mt-[15px] text-[10px] leading-[14px] text-[#1a73e8]">View larger map</span>
      </div>
      <div className="flex flex-col items-center">
        <svg viewBox="0 0 16 16" className="mt-[11px] h-4 w-4">
          <path d="M0.4 3L2.6 1L8.2 6.6L5.6 9.4Z" fill="#b5d2f8" />
          <path d="M5 16V10.5C5 8.500 5.500 7.600 7 6.200L9.600 3.600L7.500 1H15.500V8.500L12.500 6L10 8.600C9 9.600 8.700 10 8.700 11.200V16Z" fill="#5596ea" />
        </svg>
        <span className="mt-[4px] text-[10px] leading-[14px] text-[#1a73e8]">Directions</span>
      </div>
    </div>
  );
}

function ZoomControl() {
  return (
    <div className="absolute bottom-[19px] right-2 flex h-[67px] w-[34px] flex-col items-center rounded-[2px] bg-white shadow-[0_1px_4px_-1px_rgba(0,0,0,0.3)]">
      <svg viewBox="0 0 14 14" className="mt-[9px] h-[14px] w-[14px]"><path d="M5.300 0h3.400v5.300H14v3.400H8.700V14H5.300V8.700H0V5.300h5.300z" fill="#666" /></svg>
      <div className="mt-[10px] h-px w-[25px] bg-[#e6e6e6]" />
      <div className="mt-[14px] h-[4px] w-[14px] bg-[#666]" />
    </div>
  );
}

function Satellite() {
  return (
    <div className="absolute bottom-2 left-[9px] h-[33px] w-[33px] overflow-hidden rounded-[2px] border border-white shadow-[0_1px_3px_rgba(0,0,0,0.4)]">
      <svg viewBox="0 0 32 32" className="block h-full w-full">
        <defs>
          <filter id="terrain" x="0" y="0" width="100%" height="100%" colorInterpolationFilters="sRGB">
            <feTurbulence type="fractalNoise" baseFrequency="0.16" numOctaves="4" seed="6" />
            <feColorMatrix values="0.5 0 0 0 0.19 0.42 0.1 0 0 0.15 0.4 0 0 0 0.16 0 0 0 0 1" />
          </filter>
        </defs>
        <rect width="32" height="32" filter="url(#terrain)" />
      </svg>
    </div>
  );
}

const CARDS = [
  [FaLocationArrow, "Pune, Maharashtra, India"],
  [FaPhone, "+012 345 6789"],
  [FaEnvelopeOpen, "onkar@gmail.com"],
];

export default function App() {
  return (
    <div className="h-[919px] overflow-hidden bg-white font-['Roboto',sans-serif] text-[#1d284b]">
      <header className="h-[75px] border-t-2 border-[#2a0a57] bg-white shadow-[0_1px_4px_rgba(0,0,0,0.12)]">
        <div className="ml-[410px] flex h-full w-[1080px] justify-between">
          <div className="-ml-px flex items-center gap-[7px] text-[#15c6df]">
            <FaClinicMedical className="h-[33px] w-[37.500px]" />
            <span className="font-['Roboto_Condensed'] text-[33.200px] font-bold leading-none">FIND MY DOC</span>
          </div>
          <nav className="flex gap-[25px] font-['Inter'] text-[15px] font-medium leading-[73px] tracking-[0.02px]">
            <a>Home</a>
            <a>Find Doctors</a>
            <a>Add Doctor</a>
            <a className="box-border h-[73px] border-b-[5px] border-[#15c6df] font-bold tracking-[-0.25px] text-[#15c6df]">Contact</a>
          </nav>
        </div>
      </header>

      <main className="ml-[410px] w-[1080px]">
        <div className="flex h-[192px] flex-col items-center font-['Roboto_Condensed'] font-bold">
          <span className="mt-[10px] border-b-4 border-[#dde1e7] text-[16.700px] leading-[20px] text-[#15c6df]">ANY QUESTIONS?</span>
          <h1 className="mt-[6px] text-center text-[46.700px] leading-[56px]">
            Please Feel Free To
            <br />
            Contact Us
          </h1>
        </div>

        <div className="grid grid-cols-3 gap-10">
          {CARDS.map(([Icon, text]) => (
            <div key={text} className="flex h-[167px] flex-col items-center rounded-lg bg-[#eff4f9] pt-[35px]">
              <div className="flex h-[60px] w-[81px] items-center justify-center rounded-[60%_40%] bg-[#15c6df] text-white">
                <Icon className="h-7 w-7" />
              </div>
              <span className="mt-[20px] font-['Roboto_Condensed'] text-[13.200px] font-bold leading-[18px] tracking-[0.03px]">{text}</span>
            </div>
          ))}
        </div>

        <div className="relative mt-10 h-[417px] overflow-hidden">
          <CityMap />
          <PlaceCard />
          <Satellite />
          <ZoomControl />
          <div className="absolute bottom-0 right-0 flex h-[11px] gap-[10px] bg-[#f1f3f5]/80 pl-[4px] pr-[5px] text-[8.400px] leading-[11px] text-black">
            <span>Keyboard shortcuts</span>
            <span>Map data ©2024 Google</span>
            <span>Terms</span>
            <span>Report a map error</span>
          </div>
        </div>
      </main>

      <footer className="-mt-px h-[29px] overflow-hidden bg-[#1d284b] text-[13.250px] font-medium leading-[20px] text-white">
        <div className="ml-[410px] flex w-[1080px] justify-between pt-[22px]">
          <span>© <span className="text-[#15c6df]">FindMyDoc</span>. All Rights Reserved.</span>
          <span>Designed by <span className="text-[#15c6df]">Onkar Jagtap</span></span>
        </div>
      </footer>
    </div>
  );
}
